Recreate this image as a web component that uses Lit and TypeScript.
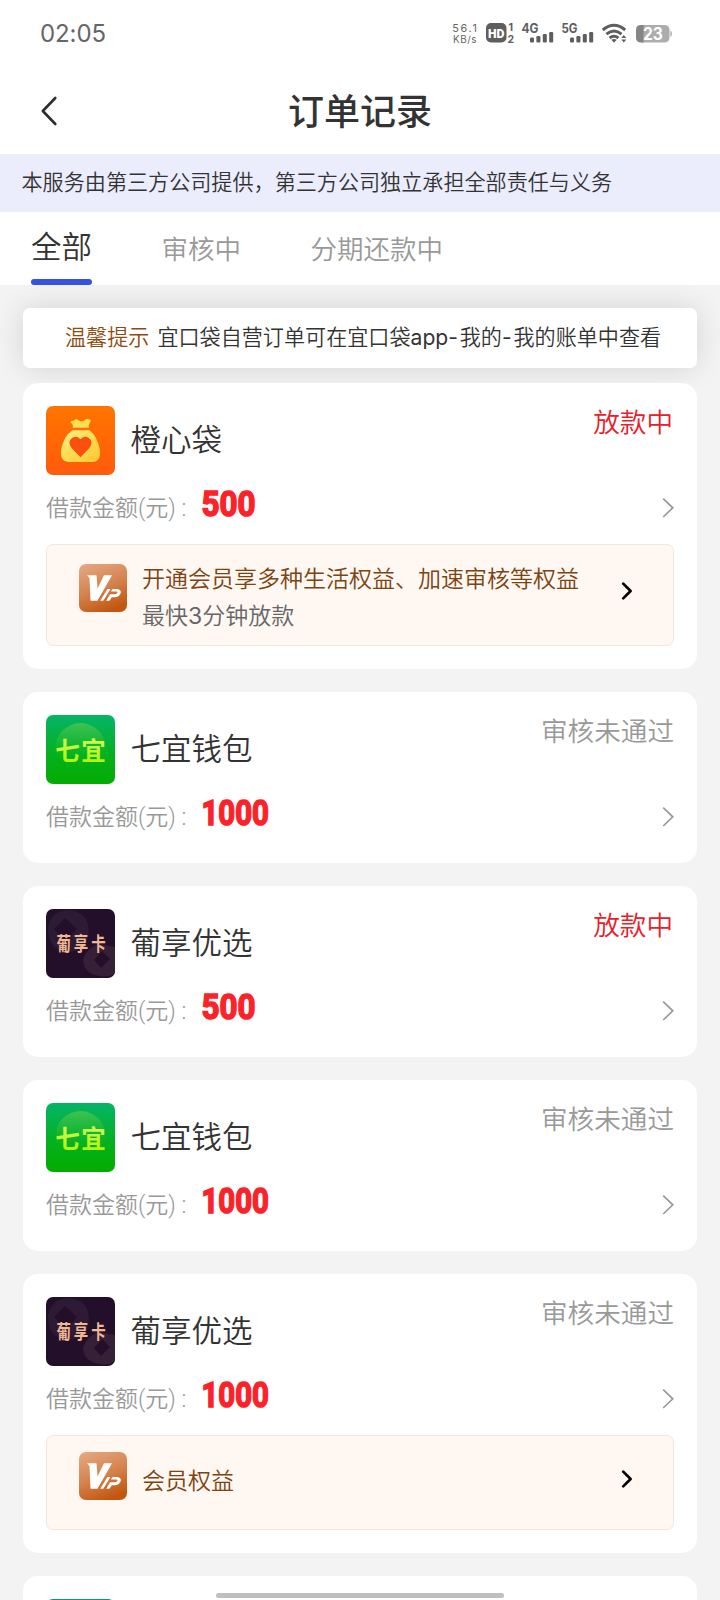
import { LitElement, html, css, svg, nothing } from "lit";
import { customElement, property } from "lit/decorators.js";

type Logo = "orange" | "green" | "dark";

interface Order {
  logo: Logo;
  name: string;
  amount: string;
  status: string;
  active?: boolean;
  vip?: "full" | "short";
}

const ORDERS: Order[] = [
  { logo: "orange", name: "橙心袋", amount: "500", status: "放款中", active: true, vip: "full" },
  { logo: "green", name: "七宜钱包", amount: "1000", status: "审核未通过" },
  { logo: "dark", name: "葡享优选", amount: "500", status: "放款中", active: true },
  { logo: "green", name: "七宜钱包", amount: "1000", status: "审核未通过" },
  { logo: "dark", name: "葡享优选", amount: "1000", status: "审核未通过", vip: "short" },
];

@customElement("status-bar")
export class StatusBar extends LitElement {
  static styles = css`
    :host {
      display: flex;
      justify-content: space-between;
      height: 68px;
      box-sizing: border-box;
      padding: 10px 40px 0 40px;
      font-family: Roboto, "Noto Sans", sans-serif;
      font-weight: 400;
    }
    .time {
      font-family: Inter, Roboto, sans-serif;
      font-size: 24px;
      letter-spacing: -0.1px;
      line-height: 48px;
      color: #666;
    }
    svg { display: block; overflow: visible; }
    .tiny { font-family: Inter, Roboto, sans-serif; font-size: 10.8px; fill: #666; }
    .unit { font-size: 9.8px; }
    .net { font-family: Inter, Roboto, sans-serif; font-size: 12.5px; font-weight: 700; fill: #5e5e5e; }
    .sim { font-size: 10.5px; }
    .hd { font-family: Roboto, sans-serif; font-size: 12.5px; font-weight: 900; fill: #fff; }
    .pct { font-family: Inter, Roboto, sans-serif; font-size: 17px; font-weight: 700; fill: #fff; }
  `;
  private bars(x: number) {
    return [0, 1, 2, 3].map((i) => {
      const h = [5, 6.5, 8.5, 10.5][i];
      return svg`<rect x=${x + i * 6.4} y=${42.5 - h} width="4" height=${h} rx="1.2" fill="#5e5e5e"/>`;
    });
  }
  render() {
    return html`
      <span class="time">02:05</span>
      <svg width="240" height="50" viewBox="440 10 240 50">
        <text class="tiny" x="452.3" y="31.6" textLength="24.5">56.1</text>
        <text class="tiny unit" x="453" y="42.6" textLength="23.5">KB/s</text>
        <rect x="486" y="23" width="20.5" height="19.5" rx="5" fill="#5e5e5e" />
        <text class="hd" x="488" y="37.5" textLength="16.5" lengthAdjust="spacingAndGlyphs">HD</text>
        <text class="net sim" x="508.5" y="30.6">1</text>
        <text class="net sim" x="507.5" y="42.6">2</text>
        <text class="net" x="521.5" y="33" textLength="17" lengthAdjust="spacingAndGlyphs">4G</text>
        ${this.bars(530)}
        <text class="net" x="561.5" y="33" textLength="16" lengthAdjust="spacingAndGlyphs">5G</text>
        ${this.bars(570)}
        <g fill="none" stroke="#5e5e5e" stroke-width="3">
          <path d="M602.8 30 Q614 20.6 625.2 30" />
          <path d="M606.4 34.2 Q614 27.8 621.6 34.2" />
          <path d="M609.6 38 Q614 34.6 618.4 38" />
        </g>
        <path d="M611.3 39.8 Q614 38 616.7 39.8 L614 42.8Z" fill="#5e5e5e" />
        <path d="M621.3 38 L623.8 35 L626.3 38Z M621.3 39.6 L623.8 42.6 L626.3 39.6Z" fill="#5e5e5e" />
        <path d="M641 25 H664 Q669.5 25 669.5 30 V37.5 Q669.5 42.5 664 42.5 H641Z" fill="#adadad" />
        <path d="M643.6 25 V42.5 H641 Q636 42.5 636 37.5 V30 Q636 25 641 25Z" fill="#858585" />
        <path d="M670.3 30.5 Q672 31.5 672 33.8 Q672 36 670.3 37Z" fill="#adadad" />
        <text class="pct" x="643" y="40.3" textLength="20" lengthAdjust="spacingAndGlyphs">23</text>
      </svg>
    `;
  }
}

@customElement("brand-logo")
export class BrandLogo extends LitElement {
  @property() kind: Logo = "orange";
  static styles = css`
    :host { display: block; width: 69px; height: 69px; border-radius: 7px; overflow: hidden; }
    svg { display: block; }
    .mark { font-family: "Noto Sans CJK SC", sans-serif; font-weight: 700; }
  `;
  render() {
    if (this.kind === "orange") {
      return html`<svg width="69" height="69" viewBox="0 0 69 69">
        <defs>
          <linearGradient id="bg" x1="0" y1="0" x2="0" y2="1">
            <stop offset="0" stop-color="#ff7500" /><stop offset="1" stop-color="#ff5a0c" />
          </linearGradient>
          <linearGradient id="bag" x1="0" y1="0" x2="1" y2="1">
            <stop offset="0" stop-color="#fff08c" /><stop offset=".5" stop-color="#fcdc4e" /><stop offset="1" stop-color="#fbc531" />
          </linearGradient>
        </defs>
        <rect width="69" height="69" fill="url(#bg)" />
        <path d="M26.5 21.8 Q28 18.5 24.2 16.2 Q25 14.8 28 14.8 Q29.5 12.4 31.5 13.4 Q35 17 38.5 14.6 Q40.5 11.8 42 13.2 Q45 13.2 44.6 15.4 Q42 19 43 21.8Z" fill="#fddf50" />
        <path d="M26.5 24.3 H43.5 Q51 30 53.8 43 Q55.5 56 46 56 H23.5 Q13.5 56 15.2 43 Q18 30 26.5 24.3Z" fill="url(#bag)" />
        <path d="M34.5 51.2 L26 42.5 Q22 37.5 24.5 33.5 Q29 28.4 34.5 33.2 Q40 28.4 44.5 33.5 Q47 37.5 43 42.5Z" fill="#fb4f10" />
      </svg>`;
    }
    if (this.kind === "green") {
      return html`<svg width="69" height="69" viewBox="0 0 69 69">
        <defs>
          <linearGradient id="bg" x1="0" y1="0" x2="0" y2="1">
            <stop offset="0" stop-color="#05b468" /><stop offset=".6" stop-color="#04b01c" /><stop offset="1" stop-color="#04ac00" />
          </linearGradient>
          <linearGradient id="orb" x1="0" y1="0" x2="0" y2="1">
            <stop offset="0" stop-color="#7bd04a" stop-opacity=".5" /><stop offset=".75" stop-color="#35c020" stop-opacity="0" />
          </linearGradient>
          <linearGradient id="ink" x1="0" y1="0" x2="0" y2="1">
            <stop offset="0" stop-color="#dcf86a" /><stop offset="1" stop-color="#a6f500" />
          </linearGradient>
        </defs>
        <rect width="69" height="69" fill="url(#bg)" />
        <circle cx="34.5" cy="33" r="25" fill="url(#orb)" />
        <text class="mark" x="9.2" y="45" font-size="24.5" textLength="50.5" fill="url(#ink)">七宜</text>
      </svg>`;
    }
    return html`<svg width="69" height="69" viewBox="0 0 69 69">
      <rect width="69" height="69" fill="#230f29" />
      <path fill-rule="evenodd" fill="#2d1a34" d="M2 20 Q4 2 22 1 Q42 2 43 22 Q42 42 22 43 Q3 42 2 20Z M8 20 L19 9 L31 20 L20 32Z" />
      <path fill-rule="evenodd" fill="#352038" d="M37 51 Q40 40 52 35 L69 38 V64 Q62 69 54 67 Q38 65 37 51Z M48 51 L56 42 L64 50 L55 59Z" />
      <text class="mark" x="0" y="0" transform="translate(10.4 42.2) scale(.74 1)" font-size="19.5" textLength="66.5" fill="#efb792">葡享卡</text>
    </svg>`;
  }
}

@customElement("vip-strip")
export class VipStrip extends LitElement {
  @property() kind: "full" | "short" = "full";
  static styles = css`
    :host { display: block; }
    .box {
      display: flex;
      box-sizing: border-box;
      height: 102px;
      padding: 19px 40.5px 0 32px;
      border: 1px solid #f6e6da;
      border-radius: 7px;
      background: #fef7f2;
    }
    .short { height: 95px; padding-top: 16px; }
    .icon { width: 48px; height: 48px; flex: none; margin-right: 15px; }
    .copy { flex: 1; font-size: 23px; line-height: 37px; white-space: nowrap; margin-top: -5px; }
    .short .copy { margin-top: 9px; }
    .lead { color: #7d4310; }
    .sub { color: #666; }
    .num { font-family: Inter, sans-serif; font-weight: 400; }
    .go { width: 12px; height: 20px; margin-top: 17px; }
  `;
  render() {
    return html`<div class="box ${this.kind}">
      <svg class="icon" viewBox="0 0 48 48">
        <defs>
          <linearGradient id="g" x1="0.2" y1="0" x2=".6" y2="1">
            <stop offset="0" stop-color="#e3a57c" /><stop offset=".5" stop-color="#d58450" /><stop offset="1" stop-color="#c2560f" />
          </linearGradient>
        </defs>
        <rect width="48" height="48" rx="7" fill="url(#g)" />
        <path d="M8 11.3 H17.5 L18.5 24.5 L25 11.3 H33 L18.5 36.8 H11.5 L10.5 14.2 Z" fill="#fff" />
        <path d="M28.4 25 H31.5 L24.3 36.8 H21.2Z" fill="#fff" />
        <path d="M33.5 25 H38.5 Q43 26 41.5 29.5 Q40 33.2 36 33.2 H32.8 L30.5 36.8 H27.2 L31 30.2 H35.8 Q38 30 38.5 28.2 Q38.5 27.6 37.5 27.6 H32Z" fill="#fff" />
      </svg>
      <div class="copy">
        ${this.kind === "full"
          ? html`<div class="lead">开通会员享多种生活权益、加速审核等权益</div><div class="sub">最快<span class="num">3</span>分钟放款</div>`
          : html`<div class="lead">会员权益</div>`}
      </div>
      <svg class="go" viewBox="0 0 12 20"><path d="M2.2 2.6 L9.6 10 L2.2 17.4" fill="none" stroke="#000" stroke-width="2.7" stroke-linecap="round" stroke-linejoin="round" /></svg>
    </div>`;
  }
}

@customElement("order-card")
export class OrderCard extends LitElement {
  @property({ attribute: false }) order!: Order;
  static styles = css`
    :host {
      display: block;
      flex: none;
      box-sizing: border-box;
      padding: 23px;
      border-radius: 15px;
      background: #fff;
    }
    .head { display: flex; height: 69px; }
    .name { flex: 1; margin-left: 15.5px; font-size: 30.5px; line-height: 65px; color: #333; }
    .status { font-size: 26.6px; line-height: 30px; color: #999; }
    .active { color: #e8202a; padding-right: 1px; }
    .row { display: flex; align-items: center; height: 56px; }
    .label { width: 156px; font-size: 23px; line-height: 30px; margin-top: 8px; color: #999; white-space: nowrap; }
    .paren { font-family: Roboto, sans-serif; font-weight: 300; }
    .amount { flex: 1; display: flex; }
    .amount svg { overflow: visible; }
    .digits {
      font-family: Roboto, sans-serif;
      font-weight: 700;
      font-size: 35.5px;
      fill: #fb2329;
      stroke: #fb2329;
      stroke-width: 1.6px;
    }
    .more { margin-top: 9px; }
    .extra { margin-top: 13px; }
  `;
  render() {
    const o = this.order;
    const w = o.amount === "500" ? 54 : 67.5;
    return html`
      <div class="head">
        <brand-logo kind=${o.logo}></brand-logo>
        <div class="name">${o.name}</div>
        <div class="status ${o.active ? "active" : ""}">${o.status}</div>
      </div>
      <div class="row">
        <div class="label">借款金额<span class="paren">(</span>元<span class="paren">) :</span></div>
        <div class="amount">
          <svg width="80" height="50" viewBox="0 0 80 50">
            <text class="digits" x="-.5" y="38.3" textLength=${w} lengthAdjust="spacingAndGlyphs">${o.amount}</text>
          </svg>
        </div>
        <svg class="more" width="12" height="22" viewBox="0 0 12 22"><path d="M1.2 1.6 L10.8 10.8 L1.2 20" fill="none" stroke="#999" stroke-width="1.7" /></svg>
      </div>
      ${o.vip ? html`<vip-strip class="extra" kind=${o.vip}></vip-strip>` : nothing}
    `;
  }
}

@customElement("app-root")
export class AppRoot extends LitElement {
  static styles = css`
    :host {
      display: flex;
      flex-direction: column;
      position: relative;
      width: 720px;
      height: 1600px;
      overflow: hidden;
      background: #fff;
      font-family: "Noto Sans CJK SC", sans-serif;
      font-weight: 350;
      color: #333;
    }
    .title {
      display: grid;
      grid-template-columns: 80px 1fr 80px;
      height: 86px;
      align-items: center;
    }
    .back { margin-left: 40px; }
    .heading { margin: 0 0 5px; text-align: center; font-size: 36px; line-height: 44px; font-weight: 500; }
    .banner { height: 58px; padding-left: 21.5px; background: #ebedfd; font-size: 21.1px; line-height: 54px; white-space: nowrap; }
    .tabs { display: flex; height: 73px; padding-left: 31px; font-size: 26.5px; line-height: 71px; color: #999; }
    .tab { margin-right: 69.5px; }
    .current {
      display: flex;
      flex-direction: column;
      justify-content: space-between;
      font-size: 30.5px;
      line-height: 67px;
      color: #333;
    }
    .current::after { content: ""; height: 6px; border-radius: 3px; background: #3552e0; }
    .list {
      flex: 1;
      min-height: 0;
      overflow: hidden;
      display: flex;
      flex-direction: column;
      gap: 23px;
      padding: 23px 23px 0;
      background: #f3f3f3;
    }
    .notice {
      flex: none;
      display: flex;
      gap: 8px;
      height: 60px;
      box-sizing: border-box;
      padding-left: 42px;
      margin-bottom: -8px;
      border-radius: 7px;
      background: #fff;
      box-shadow: 0 0 30px rgba(0, 0, 0, 0.13);
      font-size: 21.1px;
      line-height: 56px;
      white-space: nowrap;
    }
    .tip { color: #8f4a10; }
    .latin { font-family: Inter, sans-serif; font-weight: 400; }
    .dash { font-family: Inter, sans-serif; font-weight: 400; letter-spacing: 1.8px; }
    .peek { flex: none; height: 69px; padding: 23px; border-radius: 15px; background: #fff; }
    .peek::before { content: ""; display: block; width: 69px; height: 69px; border-radius: 7px; background: #0a9c66; }
    .home { position: absolute; left: 216px; bottom: 2px; width: 288px; height: 5px; border-radius: 3px; background: #bfbfbf; }
  `;
  render() {
    return html`
      <status-bar></status-bar>
      <header class="title">
        <svg class="back" width="18" height="30" viewBox="0 0 18 30"><path d="M15.3 2 L2.8 15 L15.3 28" fill="none" stroke="#2e2e2e" stroke-width="2.6" stroke-linecap="round" stroke-linejoin="round" /></svg>
        <h1 class="heading">订单记录</h1>
      </header>
      <div class="banner">本服务由第三方公司提供，第三方公司独立承担全部责任与义务</div>
      <nav class="tabs">
        <div class="tab current">全部</div>
        <div class="tab">审核中</div>
        <div class="tab">分期还款中</div>
      </nav>
      <main class="list">
        <div class="notice"><span class="tip">温馨提示</span><span>宜口袋自营订单可在宜口袋<span class="latin">app</span><span class="dash">-</span>我的<span class="dash">-</span>我的账单中查看</span></div>
        ${ORDERS.map((o) => html`<order-card .order=${o}></order-card>`)}
        <div class="peek"></div>
      </main>
      <div class="home"></div>
    `;
  }
}
